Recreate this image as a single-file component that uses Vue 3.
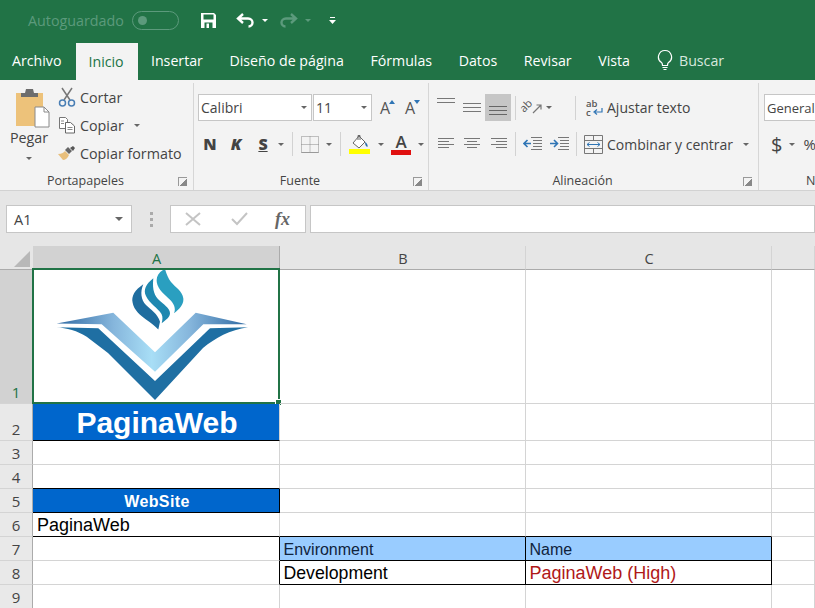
<script setup>
const tabs = ['Archivo', 'Inicio', 'Insertar', 'Diseño de página', 'Fórmulas', 'Datos', 'Revisar', 'Vista']

const columns = ['A', 'B', 'C', '']

const rows = [
  { n: 1, cells: [{ logo: true }, {}, {}, {}] },
  { n: 2, cells: [{ text: 'PaginaWeb', cls: 'title-cell dark-b' }, {}, {}, {}] },
  { n: 3, cells: [{}, {}, {}, {}] },
  { n: 4, cells: [{ cls: 'dark-b' }, {}, {}, {}] },
  { n: 5, cells: [{ text: 'WebSite', cls: 'site-cell dark-b dark-r' }, {}, {}, {}] },
  { n: 6, cells: [{ text: 'PaginaWeb', cls: 'plain dark-b' }, { cls: 'dark-b' }, { cls: 'dark-b' }, {}] },
  { n: 7, cells: [{ cls: 'dark-r' }, { text: 'Environment', cls: 'head-cell dark-b dark-r' }, { text: 'Name', cls: 'head-cell dark-b dark-r' }, {}] },
  { n: 8, cells: [{ cls: 'dark-r' }, { text: 'Development', cls: 'value-cell dark-b dark-r' }, { text: 'PaginaWeb (High)', cls: 'value-cell red dark-b dark-r' }, {}] },
  { n: 9, cells: [{}, {}, {}, {}] },
]
</script>

<template>
  <div class="app">
    <div class="titlebar">
      <span class="autosave">Autoguardado</span>
      <span class="toggle"><i></i></span>
      <svg class="save" width="17" height="17" viewBox="0 0 17 17">
        <path d="M1 1h13l2 2v13H1z" fill="#fff" />
        <rect x="3.5" y="2.5" width="10" height="5" fill="#217346" />
        <rect x="4.5" y="10.5" width="8" height="5.5" fill="#217346" />
        <rect x="6.5" y="11.5" width="2.5" height="4.5" fill="#fff" />
      </svg>
      <svg class="undo" width="19" height="17" viewBox="0 0 19 17">
        <path d="M7 2 2 6.500 7 11M2.500 6.500H12c3 0 4.500 2 4.500 4s-1.500 4-4 4" fill="none" stroke="#fff" stroke-width="2.400" />
      </svg>
      <span class="caret white undo-caret"></span>
      <svg class="redo" width="19" height="17" viewBox="0 0 19 17">
        <path d="M12 2l5 4.500L12 11M16.500 6.500H7c-3 0-4.500 2-4.500 4s1.500 4 4 4" fill="none" stroke="#5c9a7c" stroke-width="2.400" />
      </svg>
      <span class="caret dim redo-caret"></span>
      <svg class="qat" width="7" height="9" viewBox="0 0 7 9">
        <path d="M1 1h5v1H1zM0 4h7L3.500 8z" fill="#fff" />
      </svg>
    </div>

    <div class="tabs">
      <div v-for="t in tabs" :key="t" class="tab" :class="{ active: t === 'Inicio' }">{{ t }}</div>
      <div class="search">
        <svg width="16" height="22" viewBox="0 0 16 22">
          <path d="M8 1.500a6.500 6.500 0 0 0-3.500 12c.8.600 1 1.500 1 3h5c0-1.500.2-2.400 1-3A6.500 6.500 0 0 0 8 1.500zM5.500 18.500h5M6.500 20.500h3" fill="none" stroke="#fff" stroke-width="1.200" />
        </svg>
        <span>Buscar</span>
      </div>
    </div>

    <div class="ribbon">
      <section class="group clip">
        <div class="group-body clip-body">
          <div class="paste">
            <svg width="35" height="40" viewBox="0 0 35 40">
              <rect x="1" y="5" width="27" height="33" fill="#edc27a" />
              <path d="M6 9V5h4l1-4h7l1 4h4v4z" fill="#6d6d6d" />
              <path d="M20 19h9l5 5v15H20z" fill="#fff" stroke="#8a8a8a" />
              <path d="M29 19v5h5" fill="none" stroke="#8a8a8a" />
            </svg>
            <span>Pegar</span>
            <span class="caret"></span>
          </div>
          <div class="clip-list">
            <div class="clip-item">
              <svg width="18" height="20" viewBox="0 0 18 20">
                <path d="M4 1l8 12M14 1 6 13" stroke="#777" stroke-width="1.500" fill="none" />
                <circle cx="4.500" cy="16" r="3" fill="none" stroke="#4a7fb5" stroke-width="1.500" />
                <circle cx="13.500" cy="16" r="3" fill="none" stroke="#4a7fb5" stroke-width="1.500" />
              </svg>
              <span>Cortar</span>
            </div>
            <div class="clip-item">
              <svg width="18" height="18" viewBox="0 0 18 18">
                <path d="M1.500 1.500h6l2 2v9h-8z" fill="#fff" stroke="#777" />
                <path d="M7.500 6.500h5l4 3.500v7h-9z" fill="#fff" stroke="#666" />
                <path d="M9.500 11.500h5M9.500 13.500h5M3 5h3M3 7.500h3" stroke="#888" />
              </svg>
              <span>Copiar</span>
              <span class="caret copy-caret"></span>
            </div>
            <div class="clip-item">
              <svg width="18" height="16" viewBox="0 0 18 16">
                <path d="M0 9c4 0 6-2 7-3l4 4c-1 3-4 5-6 5z" fill="#e8bf7c" />
                <path d="M7 5l3-3 4 4-3 3z" fill="#666" />
                <path d="M12 3l3-2 2 2-2 3z" fill="#555" />
              </svg>
              <span>Copiar formato</span>
            </div>
          </div>
        </div>
        <div class="group-label">Portapapeles<i class="launcher"></i></div>
      </section>

      <section class="group font">
        <div class="group-body">
          <div class="row row-top">
            <div class="combo font-name"><span>Calibri</span><span class="caret"></span></div>
            <div class="combo font-size"><span>11</span><span class="caret"></span></div>
            <div class="grow-font"><span>A</span><svg width="6" height="4" viewBox="0 0 6 4"><path d="M0 4 3 0l3 4z" fill="#2f75b5" /></svg></div>
            <div class="grow-font shrink"><span>A</span><svg width="6" height="4" viewBox="0 0 6 4"><path d="M0 0h6L3 4z" fill="#2f75b5" /></svg></div>
          </div>
          <div class="row row-bottom font-tools">
            <b class="style-btn n">N</b>
            <b class="style-btn k">K</b>
            <b class="style-btn s">S</b>
            <span class="caret"></span>
            <i class="sep"></i>
            <svg class="borders" width="18" height="17" viewBox="0 0 18 17">
              <path d="M.5.500h17v16H.5zM9 .500v16M.500 8.500h17" fill="none" stroke="#888" stroke-dasharray="1 1" />
              <path d="M.5 16.500h17" stroke="#999" />
            </svg>
            <span class="caret"></span>
            <i class="sep"></i>
            <svg class="fill" width="22" height="20" viewBox="0 0 22 20">
              <path d="M4 9l6-7 6 6-6 6z" fill="#fff" stroke="#666" />
              <path d="M9 6V1.500h2V6" fill="none" stroke="#666" />
              <path d="M16 8c2 1 3 3 2.500 5-1.500-.5-2.500-2-2.500-5z" fill="#2f6fa8" />
              <rect y="15" width="21" height="5" fill="#ffff00" />
            </svg>
            <span class="caret"></span>
            <div class="font-color"><span>A</span><i></i></div>
            <span class="caret"></span>
          </div>
        </div>
        <div class="group-label">Fuente<i class="launcher"></i></div>
      </section>

      <section class="group align">
        <div class="group-body">
          <div class="row row-top">
            <svg class="al a1" width="18" height="8" viewBox="0 0 18 8"><path d="M0 .500h18M0 4.500h18" stroke="#777" /></svg>
            <svg class="al a2" width="18" height="12" viewBox="0 0 18 12"><path d="M0 1.500h18M0 5.500h18M0 9.500h18" stroke="#777" /></svg>
            <div class="al-active">
              <svg width="18" height="11" viewBox="0 0 18 11"><path d="M0 1.500h18M0 5.500h18M0 9.500h18" stroke="#666" /></svg>
            </div>
            <i class="sep align-sep"></i>
            <svg class="orient" width="20" height="18" viewBox="0 0 20 18">
              <text x="1" y="14" transform="rotate(-45 1 14)" class="ab big">ab</text>
              <path d="M10 14 18 6M13.500 6H18v4.500" fill="none" stroke="#777" stroke-width="1.200" />
            </svg>
            <span class="caret orient-caret"></span>
            <i class="sep wrap-sep"></i>
            <svg class="wrap-icon" width="17" height="20" viewBox="0 0 17 20">
              <text x="0" y="9" class="ab">ab</text>
              <text x="0" y="18" class="ab">c</text>
              <path d="M16 10v4H9M11 11.500l-3 2.500 3 2.500" fill="none" stroke="#2f75b5" stroke-width="1.200" />
            </svg>
            <span class="tool-text">Ajustar texto</span>
          </div>
          <div class="row row-bottom">
            <svg class="hl h1" width="16" height="12" viewBox="0 0 16 12"><path d="M0 .500h16M0 3.500h11M0 6.500h16M0 9.500h11" stroke="#777" /></svg>
            <svg class="hl h2" width="16" height="12" viewBox="0 0 16 12"><path d="M0 .500h16M3 3.500h10M0 6.500h16M3 9.500h10" stroke="#777" /></svg>
            <svg class="hl h3" width="16" height="12" viewBox="0 0 16 12"><path d="M0 .500h16M5 3.500h11M0 6.500h16M5 9.500h11" stroke="#777" /></svg>
            <i class="sep indent-sep"></i>
            <svg class="indent" width="19" height="14" viewBox="0 0 19 14">
              <path d="M8 .500h11M10 3.500h9M10 6.500h9M10 9.500h9M8 12.500h11" stroke="#777" />
              <path d="M8 6.500H1M4.500 3 1 6.500 4.500 10" fill="none" stroke="#2f75b5" stroke-width="1.600" />
            </svg>
            <svg class="indent second" width="19" height="14" viewBox="0 0 19 14">
              <path d="M8 .500h11M10 3.500h9M10 6.500h9M10 9.500h9M8 12.500h11" stroke="#777" />
              <path d="M0 6.500h7M4 3l3.500 3.500L4 10" fill="none" stroke="#2f75b5" stroke-width="1.600" />
            </svg>
            <i class="sep merge-sep"></i>
            <svg class="merge-icon" width="19" height="19" viewBox="0 0 19 19">
              <path d="M.5.500h18v18H.5zM.500 5.500h18M.500 13.500h18M9.500.500v5M9.500 13.500v5" fill="none" stroke="#777" />
              <path d="M3 9.500h13M5.500 7.500l-2.500 2 2.500 2M13.500 7.500l2.500 2-2.500 2" fill="none" stroke="#2f75b5" />
            </svg>
            <span class="tool-text">Combinar y centrar</span>
            <span class="caret merge-caret"></span>
          </div>
        </div>
        <div class="group-label">Alineación<i class="launcher"></i></div>
      </section>

      <section class="group number">
        <div class="group-body">
          <div class="row row-top">
            <div class="combo number-format"><span>General</span></div>
          </div>
          <div class="row row-bottom number-tools">
            <span class="dollar">$</span>
            <span class="caret"></span>
            <span class="percent">%</span>
          </div>
        </div>
        <div class="group-label number-label">N</div>
      </section>
    </div>

    <div class="formula-bar">
      <div class="name-box"><span>A1</span><span class="caret"></span></div>
      <div class="grip"><i></i><i></i><i></i></div>
      <div class="fx-box">
        <svg width="16" height="14" viewBox="0 0 16 14"><path d="M1 1l14 12M15 1 1 13" stroke="#c4c4c4" stroke-width="2" /></svg>
        <svg width="17" height="14" viewBox="0 0 17 14"><path d="M1 7l5 5L16 1" fill="none" stroke="#c4c4c4" stroke-width="2" /></svg>
        <span class="fx">fx</span>
      </div>
      <div class="formula-input"></div>
    </div>

    <div class="sheet">
      <div class="col-head corner"><svg width="16" height="16" viewBox="0 0 16 16"><path d="M16 0v16H0z" fill="#b8b8b8" /></svg></div>
      <div
        v-for="c in columns"
        :key="c"
        class="col-head"
        :class="{ selected: c === 'A' }"
      >{{ c }}</div>

      <template v-for="r in rows" :key="r.n">
        <div class="row-head" :class="{ selected: r.n === 1 }">{{ r.n }}</div>
        <div v-for="(cell, i) in r.cells" :key="i" class="cell" :class="cell.cls">
          <template v-if="cell.logo">
            <svg class="logo" width="247" height="134" viewBox="33 270 247 134">
              <defs>
                <linearGradient id="wing" x1="0" y1="0" x2="1" y2="0">
                  <stop offset="0" stop-color="#2f6aa3" />
                  <stop offset="0.3" stop-color="#86b6dc" />
                  <stop offset="0.5" stop-color="#a8def6" />
                  <stop offset="0.7" stop-color="#86b6dc" />
                  <stop offset="1" stop-color="#2f6aa3" />
                </linearGradient>
              </defs>
              <path d="M56.700 323.500 113.300 312.700 155 352.300 195.700 312.700 246.700 324.300H203.300L155 371.700 101.700 324.300z" fill="url(#wing)" />
              <path d="M56.700 327.300 98.300 328.300 155 381 210 328.300 248 327.300C230 330 215 338 203 348L155 400 108 353 86.700 336.700C78 331 66 328 56.700 327.300z" fill="#1f6fa3" />
              <path d="M143.300 284.300C135 290 131 296 132.700 303 134 310 140 315 146 319.500 151 323 155 326 158.300 329.500L160 321.700C158 314 150 309 146 305 141 300 140 292 143.300 284.300z" fill="#1f6d9f" />
              <path d="M153.300 278.300C146 284 143 290 146 296 149 303 158 308 161.500 314 163 317 162.500 320 161.700 323.300 166 320 170 317 170 313.300 170 308 163 304 159 300 155 296 152 291 153.300 278.300z" fill="#1f88b0" />
              <path d="M165 269C158 272 155 278 157.500 285 160 292 168 297 172 302 175 306 175.500 310 174 313.300 180 309 184 304 183.300 298.300 182.500 291 175 287 171 282 168 278 166.500 274 165 269z" fill="#2a9fc0" />
            </svg>
            <div class="selection"><i></i></div>
          </template>
          <template v-else>{{ cell.text }}</template>
        </div>
      </template>
    </div>
  </div>
</template>

<style scoped>
.app { width: 815px; height: 608px; overflow: hidden; background: #fff; color: #444; font-family: "Open Sans", "Noto Sans", sans-serif; font-size: 14px; }
i { display: block; font-style: normal; }
svg { display: block; flex: none; }

.caret { flex: none; display: inline-block; width: 0; height: 0; border-left: 3.5px solid transparent; border-right: 3.5px solid transparent; border-top: 3.5px solid #666; }
.caret.white { border-top-color: #fff; }
.caret.dim { border-top-color: #5c9a7c; }

.titlebar { height: 40px; background: #217346; display: flex; align-items: center; }
.autosave { margin-left: 28px; color: #5c9a7c; font-size: 14.300px; }
.toggle { margin-left: 8px; width: 47px; height: 19px; box-sizing: border-box; border: 1px solid #5c9a7c; border-radius: 10px; display: flex; align-items: center; padding-left: 5px; }
.toggle i { width: 9px; height: 9px; border-radius: 50%; background: #5c9a7c; }
.save { margin-left: 21px; }
.undo { margin-left: 19px; }
.undo-caret { margin-left: 7px; }
.redo { margin-left: 11px; }
.redo-caret { margin-left: 7px; }
.qat { margin-left: 18px; }

.tabs { height: 40px; background: #217346; display: flex; color: #fff; font-size: 14.200px; }
.tab { padding: 0 13.300px; display: flex; align-items: center; height: 100%; white-space: nowrap; }
.tab:first-child { padding: 0 15px 0 12px; }
.tab.active { background: #f3f3f3; color: #217346; margin: 3px 0 0; height: 37px; padding: 0 14px 0 12px; }
.search { display: flex; align-items: center; gap: 6px; margin-left: 13.700px; color: #d8e8df; }

.ribbon { height: 111px; box-sizing: border-box; background: #f3f3f3; border-bottom: 1px solid #d2d2d2; display: flex; }
.group { flex: none; box-sizing: border-box; height: 107px; margin-top: 3px; border-right: 1px solid #d6d6d6; }
.group-body { height: 82px; padding-top: 11px; box-sizing: border-box; }
.group-label { position: relative; height: 25px; padding-right: 22px; text-align: center; font-size: 12.500px; line-height: 32px; color: #444; }
.launcher { position: absolute; right: 6px; top: 12px; width: 8px; height: 8px; border-left: 1px solid #999; border-top: 1px solid #999; background: linear-gradient(135deg, transparent 55%, #888 55%); }
.row { display: flex; align-items: center; }
.row-top { height: 27px; }
.row-bottom { height: 24px; margin-top: 11px; }
.sep { width: 1px; height: 24px; background: #d2d2d2; flex: none; }

.clip { width: 194px; }
.clip-body { display: flex; padding-top: 0; }
.paste { width: 42px; margin-left: 8px; display: flex; flex-direction: column; align-items: center; padding-top: 5px; font-size: 14.300px; }
.paste svg { margin-left: 7px; }
.paste .caret { margin-top: 10px; }
.clip-list { margin-left: 8px; font-size: 14.300px; }
.clip-item { height: 28px; display: flex; align-items: center; gap: 4px; white-space: nowrap; }
.clip-item svg { width: 18px; }
.copy-caret { margin-left: 6px; }

.font { width: 235px; }
.combo { height: 27px; box-sizing: border-box; background: #fff; border: 1px solid #c6c6c6; display: flex; align-items: center; justify-content: space-between; padding: 0 4px 0 2px; flex: none; }
.font-name { width: 114px; margin-left: 4px; }
.font-size { width: 59px; margin-left: 1px; }
.grow-font { width: 16px; margin-left: 8px; display: flex; font-size: 16px; line-height: 20px; color: #555; }
.grow-font.shrink { margin-left: 9px; }
.grow-font svg { margin-left: -1px; margin-top: 2px; }
.font-tools .caret { margin-left: 7px; }
.style-btn { width: 16px; text-align: center; font-size: 16px; color: #444; font-weight: 800; }
.n { margin-left: 8px; }
.k { margin-left: 10px; font-style: italic; }
.s { margin-left: 11px; text-decoration: underline; }
.font-tools .sep { margin-left: 8px; }
.borders { margin-left: 8px; }
.fill { margin-left: 8px; }
.font-color { margin-left: 7px; width: 20px; display: flex; flex-direction: column; align-items: center; font-size: 17px; line-height: 17px; font-weight: 600; color: #444; }
.font-color i { width: 20px; height: 5px; background: #e01010; }

.align { width: 330px; }
.al { margin-left: 8px; }
.al.a1 { margin-top: -12px; }
.al-active { width: 26px; height: 27px; background: #c6c6c6; display: flex; align-items: center; justify-content: center; margin-left: 4px; padding-top: 5px; box-sizing: border-box; }
.align-sep { margin-left: 4px; }
.orient { margin-left: 7px; overflow: visible; }
.orient-caret { margin-left: 3px; }
.wrap-sep { margin-left: 23px; }
.wrap-icon { margin-left: 10px; overflow: visible; }
.ab { font-size: 9.500px; fill: #555; font-family: "Open Sans", sans-serif; font-weight: 600; }
.ab.big { font-size: 11px; font-weight: 400; }
.tool-text { margin-left: 4px; white-space: nowrap; }
.hl { margin-left: 10px; }
.hl.h1 { margin-left: 9px; }
.hl.h3 { margin-left: 11px; }
.indent-sep { margin-left: 8px; }
.indent { margin-left: 7px; }
.indent.second { margin-left: 8px; }
.merge-sep { margin-left: 7px; }
.merge-icon { margin-left: 7px; }
.merge-caret { margin-left: 10px; }

.number { border-right: 0; width: 56px; }
.number-format { width: 51px; margin-left: 5px; padding: 0 0 0 2px; font-size: 13px; border-right: 0; }
.dollar { margin-left: 12px; font-size: 20px; }
.number-tools .caret { margin-left: 7px; }
.percent { margin-left: 8px; font-size: 15px; }
.number-label { text-align: left; padding: 0 0 0 47px; }

.formula-bar { height: 55px; box-sizing: border-box; background: #e6e6e6; padding: 14px 0 13px 6px; display: flex; }
.name-box { width: 126px; box-sizing: border-box; background: #fff; border: 1px solid #c6c6c6; display: flex; align-items: center; justify-content: space-between; padding: 0 8px 0 7px; font-size: 14.500px; }
.name-box .caret { border-left-width: 4px; border-right-width: 4px; border-top-width: 4px; }
.grip { width: 38px; display: flex; flex-direction: column; align-items: center; justify-content: center; gap: 3px; }
.grip i { width: 3px; height: 3px; background: #aaa; }
.fx-box { width: 136px; box-sizing: border-box; background: #fff; border: 1px solid #c6c6c6; display: flex; align-items: center; padding-left: 14px; }
.fx-box svg + svg { margin-left: 30px; }
.fx { margin-left: 27px; font-family: "Liberation Serif", serif; font-style: italic; font-weight: 700; font-size: 18px; color: #666; }
.formula-input { flex: 1; margin-left: 4px; background: #fff; border: 1px solid #c6c6c6; box-sizing: border-box; }

.sheet { display: grid; grid-template-columns: 33px 247px 246px 246px 43px; grid-template-rows: 24px 134px 37px repeat(7, 24px); }
.col-head { background: #e6e6e6; border-bottom: 1px solid #ababab; border-right: 1px solid #d4d4d4; box-sizing: border-box; padding-left: 1px; text-align: center; font-size: 14.500px; line-height: 25px; color: #444; }
.col-head.selected { background: #d2d2d2; color: #217346; border-right-color: #ababab; }
.corner { border-right: 0; display: flex; justify-content: flex-end; align-items: flex-end; padding: 0 3px 2px 0; }
.row-head { background: #e9e9e9; border-right: 1px solid #ababab; border-bottom: 1px solid #d4d4d4; box-sizing: border-box; display: flex; align-items: flex-end; justify-content: center; font-size: 15px; line-height: 22px; color: #444; }
.row-head.selected { background: #d2d2d2; color: #217346; }
.cell { position: relative; box-sizing: border-box; border-right: 1px solid #d4d4d4; border-bottom: 1px solid #d4d4d4; font-family: "Liberation Sans", Arial, sans-serif; color: #000; white-space: nowrap; overflow: visible; }
.logo { position: absolute; left: 0; top: 0; }
.selection { position: absolute; left: -1px; right: -1px; top: -2px; bottom: -1px; border: 2px solid #217346; pointer-events: none; }
.selection i { position: absolute; right: -4px; bottom: -4px; width: 5px; height: 5px; background: #217346; border: 1px solid #fff; }
.dark-b { border-bottom-color: #000; }
.dark-r { border-right-color: #000; }
.title-cell { background: #0066cc; color: #fff; font-weight: 700; font-size: 30px; line-height: 37px; padding-left: 2px; text-align: center; }
.site-cell { background: #0066cc; color: #fff; font-weight: 700; font-size: 16px; letter-spacing: 0.400px; line-height: 25px; padding-left: 2px; text-align: center; }
.plain { font-size: 18px; line-height: 24px; padding-left: 4px; }
.head-cell { background: #99ccff; font-size: 16px; line-height: 25px; padding-left: 3.500px; color: #10233c; }
.value-cell { font-size: 17.700px; line-height: 24px; padding-left: 3.500px; }
.red { color: #b01818; font-size: 18px; }
</style>
